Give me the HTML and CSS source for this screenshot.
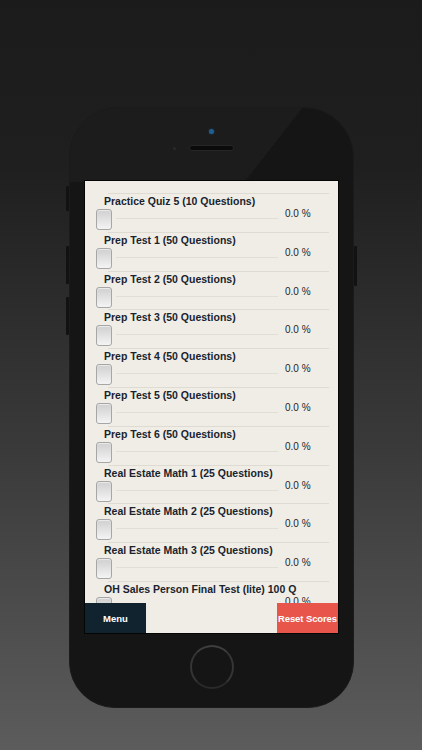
FILE: index.html
```html
<!DOCTYPE html>
<html lang="en">
<head>
    <meta charset="UTF-8">
    <meta name="viewport" content="width=device-width, initial-scale=1.0">
    <title>Quiz Scores</title>
    <link rel="stylesheet" href="styles.css">
</head>
<body>
    <div class="phone">
        <span class="side-btn mute"></span>
        <span class="side-btn vol-up"></span>
        <span class="side-btn vol-down"></span>
        <span class="side-btn power"></span>

        <div class="bezel-top">
            <span class="camera"></span>
            <div class="speaker-row">
                <span class="sensor"></span>
                <span class="speaker"></span>
            </div>
        </div>

        <div class="screen">
            <ul class="quiz-list">
                <li class="quiz">
                    <div class="quiz-title">Practice Quiz 5 (10 Questions)</div>
                    <div class="quiz-score"><span class="check"></span><span class="track"></span><span class="pct">0.0 %</span></div>
                </li>
                <li class="quiz">
                    <div class="quiz-title">Prep Test 1 (50 Questions)</div>
                    <div class="quiz-score"><span class="check"></span><span class="track"></span><span class="pct">0.0 %</span></div>
                </li>
                <li class="quiz">
                    <div class="quiz-title">Prep Test 2 (50 Questions)</div>
                    <div class="quiz-score"><span class="check"></span><span class="track"></span><span class="pct">0.0 %</span></div>
                </li>
                <li class="quiz">
                    <div class="quiz-title">Prep Test 3 (50 Questions)</div>
                    <div class="quiz-score"><span class="check"></span><span class="track"></span><span class="pct">0.0 %</span></div>
                </li>
                <li class="quiz">
                    <div class="quiz-title">Prep Test 4 (50 Questions)</div>
                    <div class="quiz-score"><span class="check"></span><span class="track"></span><span class="pct">0.0 %</span></div>
                </li>
                <li class="quiz">
                    <div class="quiz-title">Prep Test 5 (50 Questions)</div>
                    <div class="quiz-score"><span class="check"></span><span class="track"></span><span class="pct">0.0 %</span></div>
                </li>
                <li class="quiz">
                    <div class="quiz-title">Prep Test 6 (50 Questions)</div>
                    <div class="quiz-score"><span class="check"></span><span class="track"></span><span class="pct">0.0 %</span></div>
                </li>
                <li class="quiz">
                    <div class="quiz-title">Real Estate Math 1 (25 Questions)</div>
                    <div class="quiz-score"><span class="check"></span><span class="track"></span><span class="pct">0.0 %</span></div>
                </li>
                <li class="quiz">
                    <div class="quiz-title">Real Estate Math 2 (25 Questions)</div>
                    <div class="quiz-score"><span class="check"></span><span class="track"></span><span class="pct">0.0 %</span></div>
                </li>
                <li class="quiz">
                    <div class="quiz-title">Real Estate Math 3 (25 Questions)</div>
                    <div class="quiz-score"><span class="check"></span><span class="track"></span><span class="pct">0.0 %</span></div>
                </li>
                <li class="quiz">
                    <div class="quiz-title">OH Sales Person Final Test (lite) 100 Q</div>
                    <div class="quiz-score"><span class="check"></span><span class="track"></span><span class="pct">0.0 %</span></div>
                </li>
            </ul>
            <div class="toolbar">
                <button class="tb-btn menu" type="button">Menu</button>
                <button class="tb-btn reset" type="button">Reset Scores</button>
            </div>
        </div>

        <div class="bezel-bottom">
            <span class="home"></span>
        </div>
    </div>
</body>
</html>
```

FILE: styles.css
```css
* {
    margin: 0;
    padding: 0;
    box-sizing: border-box;
    font-family: "Liberation Sans", Arial, sans-serif;
}

body {
    width: 422px;
    height: 750px;
    overflow: hidden;
    background: linear-gradient(to bottom, #1b1b1b 0%, #1f1f1f 22%, #3a3a3a 60%, #5c5c5c 100%);
}

.phone {
    position: relative;
    width: 285px;
    height: 601px;
    margin: 107px 0 0 69px;
    padding: 0 15px;
    display: flex;
    flex-direction: column;
    align-items: center;
    border-radius: 50px 50px 46px 46px;
    border: 1px solid #1b1b1b;
    background:
        linear-gradient(128deg, #1c1c1c 183px, rgba(21, 21, 21, 0) 183px) no-repeat 0 0 / 100% 74px,
        #151515;
}

/* hardware buttons on the edges */
.side-btn {
    position: absolute;
    width: 3px;
    background: #121212;
    border-radius: 1px;
}

.side-btn.mute { left: -4px; top: 78px; height: 25px; }
.side-btn.vol-up { left: -4px; top: 138px; height: 38px; }
.side-btn.vol-down { left: -4px; top: 189px; height: 38px; }
.side-btn.power { right: -4px; top: 138px; height: 40px; }

.bezel-top {
    height: 72px;
    width: 100%;
    display: flex;
    flex-direction: column;
    align-items: center;
}

.camera {
    width: 5px;
    height: 5px;
    margin-top: 21px;
    border-radius: 50%;
    background: #1f5e8e;
    box-shadow: 0 0 2px rgba(40, 110, 170, 0.6);
}

.speaker-row {
    width: 100%;
    margin-top: 11px;
    display: grid;
    grid-template-columns: 1fr auto 1fr;
    align-items: center;
}

.sensor {
    justify-self: end;
    width: 3px;
    height: 3px;
    margin-right: 13px;
    border-radius: 50%;
    background: #2a2a2a;
}

.speaker {
    width: 45px;
    height: 6px;
    border-radius: 3px;
    background: #0b0b0b;
    border: 1px solid #262626;
}

.screen {
    width: 255px;
    height: 454px;
    border: 1px solid #050505;
    background: #efede6;
    display: flex;
    flex-direction: column;
    overflow: hidden;
}

.quiz-list {
    list-style: none;
    flex: 1;
    overflow: hidden;
    padding-top: 12px;
}

.quiz {
    height: 38.8px;
    padding-top: 1px;
    background: linear-gradient(#dddbd2, #dddbd2) no-repeat 23px 0 / 221px 1px;
}

.quiz-title {
    margin-left: 19px;
    height: 14px;
    line-height: 14px;
    font-size: 10.5px;
    font-weight: 700;
    color: #19232e;
    white-space: nowrap;
}

.quiz-score {
    display: flex;
    align-items: flex-start;
    margin-top: 1px;
    padding-left: 11px;
}

.check {
    width: 16px;
    height: 21px;
    border: 1px solid #a6a6a6;
    border-radius: 3px;
    background: linear-gradient(to bottom, #cfcfcf, #f4f4f4);
    box-shadow: inset 0 1px 1px rgba(255, 255, 255, 0.6);
}

.track {
    width: 162px;
    height: 1px;
    margin: 9px 0 0 4px;
    background: #e1dfd5;
}

.pct {
    margin-left: 7px;
    font-size: 10px;
    line-height: 10px;
    color: #262626;
}

.toolbar {
    height: 30px;
    display: flex;
    justify-content: space-between;
}

.tb-btn {
    width: 61px;
    height: 100%;
    border: none;
    outline: none;
    font-size: 9.5px;
    font-weight: 700;
    color: #fff;
    white-space: nowrap;
    cursor: pointer;
}

.tb-btn.menu {
    background: #11232f;
}

.tb-btn.reset {
    background: #e8554b;
    letter-spacing: -0.1px;
}

.bezel-bottom {
    flex: 1;
    display: flex;
    justify-content: center;
}

.home {
    width: 44px;
    height: 44px;
    margin-top: 11px;
    border-radius: 50%;
    border: 2px solid #353535;
    border-top-color: #3e3e3e;
    border-bottom-color: #2a2a2a;
    background: #151515;
}
```
